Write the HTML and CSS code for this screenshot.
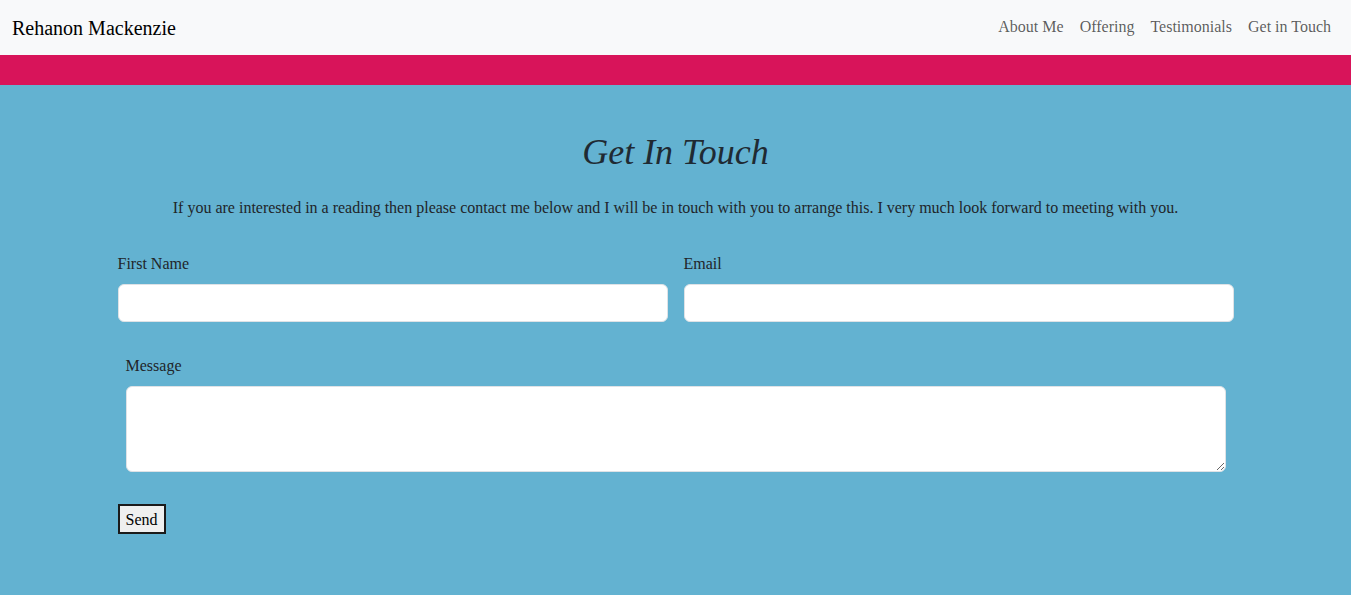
FILE: index.html
```html
<!DOCTYPE html>
<html lang="en">
<head>
<meta charset="utf-8">
<title>Rehanon Mackenzie</title>
<link rel="stylesheet" href="styles.css">
</head>
<body>
<div class="page">
  <nav class="navbar">
    <a class="brand" href="#">Rehanon Mackenzie</a>
    <ul class="nav-links">
      <li><a href="#">About Me</a></li>
      <li><a href="#">Offering</a></li>
      <li><a href="#">Testimonials</a></li>
      <li><a href="#">Get in Touch</a></li>
    </ul>
  </nav>
  <div class="accent-bar"></div>
  <section class="contact">
    <div class="container">
      <h2 class="title">Get In Touch</h2>
      <p class="intro">If you are interested in a reading then please contact me below and I will be in touch with you to arrange this. I very much look forward to meeting with you.</p>
      <form class="form">
        <div class="row">
          <div class="field">
            <label for="fname">First Name</label>
            <input id="fname" type="text" class="control">
          </div>
          <div class="field">
            <label for="email">Email</label>
            <input id="email" type="email" class="control">
          </div>
        </div>
        <div class="message">
          <label for="msg">Message</label>
          <textarea id="msg" class="control area"></textarea>
        </div>
        <button type="button" class="send">Send</button>
      </form>
    </div>
  </section>
</div>
</body>
</html>
```

FILE: styles.css
```css
html {
  background: #ffffff;
}
body {
  margin: 0;
  font-family: "Liberation Serif", "Times New Roman", serif;
  font-size: 16px;
  line-height: 1.5;
  color: #212529;
}
.page {
  width: 1351px;
  min-height: 595px;
  background: #63b2d1;
}
.navbar {
  height: 55px;
  box-sizing: border-box;
  background: #f8f9fa;
  display: flex;
  align-items: center;
  justify-content: space-between;
  padding: 0 12px;
}
.brand {
  font-size: 20px;
  color: #000;
  text-decoration: none;
  line-height: 1.5;
}
.nav-links {
  list-style: none;
  margin: 0;
  padding: 0;
  display: flex;
}
.nav-links a {
  display: block;
  padding: 7px 8px 9px;
  color: rgba(0, 0, 0, 0.65);
  text-decoration: none;
}
.accent-bar {
  height: 30px;
  background: #d8145a;
}
.contact {
  padding: 46px 0 60px;
}
.container {
  width: 1116px;
  margin: 0 auto;
  padding: 0 12px;
}
.title {
  margin: 0;
  text-align: center;
  font-style: italic;
  font-weight: 400;
  font-size: 36px;
  line-height: 1.2;
  color: #1f2a33;
}
.intro {
  margin: 22px 0 0;
  text-align: center;
}
.row {
  display: flex;
  gap: 16px;
  margin-top: 32px;
}
.field {
  flex: 1;
  display: flex;
  flex-direction: column;
}
label {
  display: block;
  margin-bottom: 8px;
}
.control {
  display: block;
  box-sizing: border-box;
  width: 100%;
  height: 38px;
  border: 1px solid #dee2e6;
  border-radius: 6px;
  background: #fff;
  font: inherit;
  padding: 6px 12px;
}
.message {
  margin: 32px 8px 0;
}
.area {
  height: 86px;
  resize: vertical;
}
.send {
  margin-top: 32px;
  font: inherit;
  font-size: 16px;
  line-height: 1.2;
  color: #000;
  background: #efefef;
  border: 2px solid #1b1b1b;
  border-radius: 0;
  padding: 4px 6px 3px;
}
```
